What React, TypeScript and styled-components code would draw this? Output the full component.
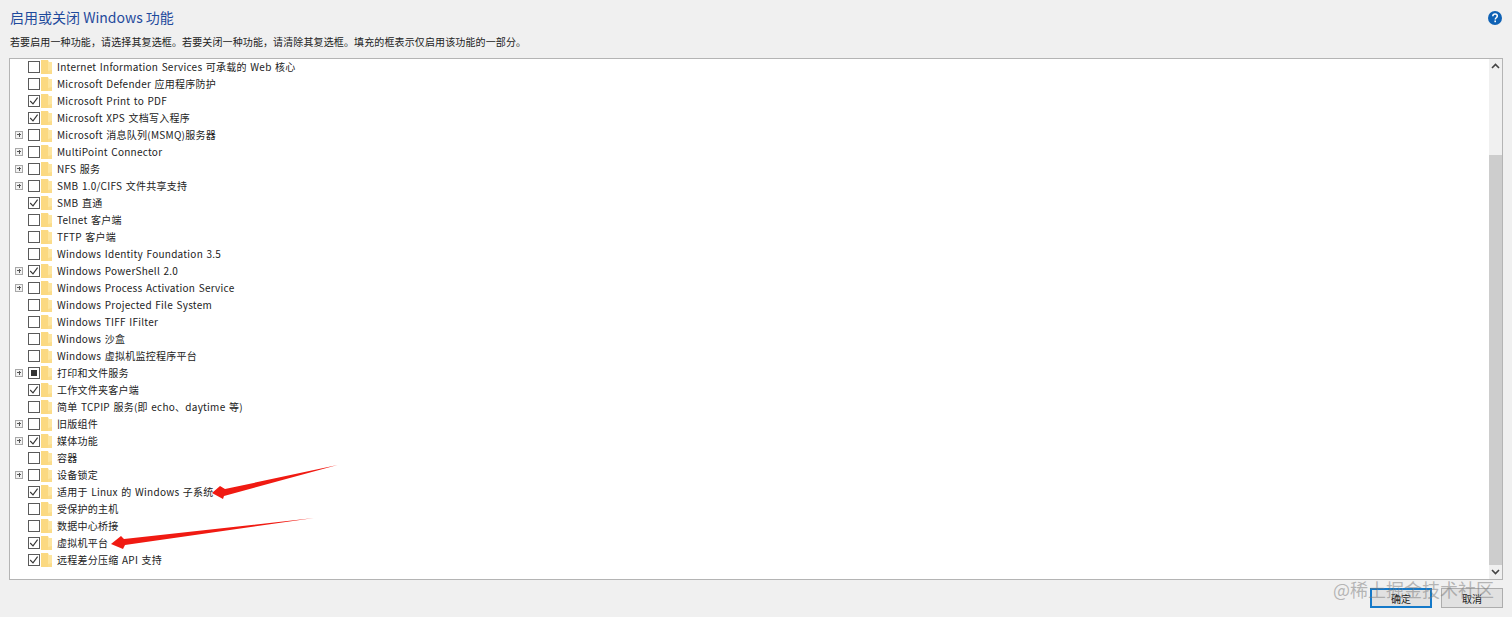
import styled, { createGlobalStyle } from 'styled-components';

type CheckState = 'off' | 'on' | 'mixed';

interface Feature {
  label: string;
  check?: CheckState;
  expandable?: boolean;
}

const features: Feature[] = [
  { label: 'Internet Information Services 可承载的 Web 核心' },
  { label: 'Microsoft Defender 应用程序防护' },
  { label: 'Microsoft Print to PDF', check: 'on' },
  { label: 'Microsoft XPS 文档写入程序', check: 'on' },
  { label: 'Microsoft 消息队列(MSMQ)服务器', expandable: true },
  { label: 'MultiPoint Connector', expandable: true },
  { label: 'NFS 服务', expandable: true },
  { label: 'SMB 1.0/CIFS 文件共享支持', expandable: true },
  { label: 'SMB 直通', check: 'on' },
  { label: 'Telnet 客户端' },
  { label: 'TFTP 客户端' },
  { label: 'Windows Identity Foundation 3.5' },
  { label: 'Windows PowerShell 2.0', check: 'on', expandable: true },
  { label: 'Windows Process Activation Service', expandable: true },
  { label: 'Windows Projected File System' },
  { label: 'Windows TIFF IFilter' },
  { label: 'Windows 沙盒' },
  { label: 'Windows 虚拟机监控程序平台' },
  { label: '打印和文件服务', check: 'mixed', expandable: true },
  { label: '工作文件夹客户端', check: 'on' },
  { label: '简单 TCPIP 服务(即 echo、daytime 等)' },
  { label: '旧版组件', expandable: true },
  { label: '媒体功能', check: 'on', expandable: true },
  { label: '容器' },
  { label: '设备锁定', expandable: true },
  { label: '适用于 Linux 的 Windows 子系统', check: 'on' },
  { label: '受保护的主机' },
  { label: '数据中心桥接' },
  { label: '虚拟机平台', check: 'on' },
  { label: '远程差分压缩 API 支持', check: 'on' },
];

const GlobalStyle = createGlobalStyle`
  html, body {
    margin: 0;
    padding: 0;
    background: #f0f0f0;
  }
`;

const Dialog = styled.div`
  position: relative;
  width: 1512px;
  height: 617px;
  overflow: hidden;
  background: #f0f0f0;
  box-sizing: border-box;
  padding: 8px 9px 0;
  font-family: "Noto Sans CJK SC", "Noto Sans", sans-serif;
  color: #1a1a1a;
`;

const Header = styled.div`
  display: flex;
  justify-content: space-between;
  align-items: center;
  height: 19px;
`;

const Title = styled.h1`
  margin: 0 0 0 1px;
  font-size: 14px;
  line-height: 19px;
  font-weight: 400;
  color: #1f4a9c;
`;

const HelpIcon = styled.svg`
  width: 14px;
  height: 14px;
  margin-right: 1px;
`;

const Description = styled.p`
  margin: 7px 0 0 1px;
  font-size: 10px;
  line-height: 16px;
  height: 16px;
  letter-spacing: 0.12px;
  color: #222;
`;

const ListBox = styled.div`
  display: flex;
  width: 1494px;
  height: 522px;
  margin-top: 8px;
  box-sizing: border-box;
  border: 1px solid #b4b4b4;
  background: #fff;
`;

const Rows = styled.ul`
  flex: 1;
  margin: -1px 0 0;
  padding: 0;
  list-style: none;
`;

const Row = styled.li`
  display: flex;
  align-items: center;
  height: 17px;
  padding-left: 5px;
`;

const ExpanderSlot = styled.span`
  width: 8px;
  height: 8px;
  margin-right: 5px;
`;

const Expander = styled.span`
  display: block;
  position: relative;
  width: 8px;
  height: 8px;
  box-sizing: border-box;
  border: 1px solid #a8a8a8;
  background: #f2f2f2;

  &::before,
  &::after {
    content: '';
    position: absolute;
    background: #555;
  }
  &::before {
    left: 1px;
    top: 2.5px;
    width: 4px;
    height: 1px;
  }
  &::after {
    left: 2.5px;
    top: 1px;
    width: 1px;
    height: 4px;
  }
`;

const CheckBox = styled.span<{ $mixed: boolean }>`
  display: flex;
  align-items: center;
  justify-content: center;
  width: 10px;
  height: 10px;
  box-sizing: content-box;
  border: 1px solid #5a5a5a;
  background: #fff;

  &::after {
    content: '';
    display: ${(p) => (p.$mixed ? 'block' : 'none')};
    width: 6px;
    height: 6px;
    background: #333;
  }
`;

const Tick = styled.svg`
  width: 10px;
  height: 10px;
`;

const Folder = styled.svg`
  width: 11px;
  height: 14px;
  margin-left: 1px;
`;

const Label = styled.span`
  margin-left: 5px;
  font-size: 10px;
  line-height: 17px;
  letter-spacing: 0.25px;
  word-spacing: 1px;
  white-space: nowrap;
  color: #222;
`;

const ScrollBar = styled.div`
  display: flex;
  flex-direction: column;
  width: 13px;
  background: #f0f0f0;
`;

const ScrollButton = styled.svg`
  width: 13px;
  height: 14px;
  flex: none;
`;

const ScrollTrack = styled.div`
  flex: 1;
  padding-top: 82px;
  display: flex;
`;

const ScrollThumb = styled.div`
  flex: 1;
  background: #cdcdcd;
`;

const Footer = styled.div`
  display: flex;
  justify-content: flex-end;
  gap: 9px;
  margin-top: 8px;
`;

const Button = styled.button<{ $primary?: boolean }>`
  width: 62px;
  height: 20px;
  padding: 0;
  box-sizing: border-box;
  border: ${(p) => (p.$primary ? '2px solid #1479c9' : '1px solid #adadad')};
  background: #e1e1e1;
  font-family: inherit;
  font-size: 10px;
  line-height: 15px;
  color: #1a1a1a;
`;

const Arrows = styled.svg`
  position: absolute;
  left: 0;
  top: 0;
  width: 1512px;
  height: 617px;
  pointer-events: none;
`;

const Watermark = styled.span`
  position: absolute;
  right: 18px;
  top: 576px;
  font-size: 18px;
  line-height: 26px;
  color: rgba(120, 120, 120, 0.5);
  white-space: nowrap;
`;

const FolderGlyph = () => (
  <Folder viewBox="0 0 11 14">
    <path d="M0 0h7l1 2h3v12H0z" fill="#fde59f" />
    <path d="M0 0h7v14H0z" fill="#fbd981" />
    <path d="M7 11l4-1v4H7z" fill="#fbdc8a" />
  </Folder>
);

const FeatureRow = ({ label, check = 'off', expandable }: Feature) => (
  <Row>
    <ExpanderSlot>{expandable && <Expander />}</ExpanderSlot>
    <CheckBox $mixed={check === 'mixed'}>
      {check === 'on' && (
        <Tick viewBox="0 0 10 10">
          <path d="M1.2 5l2.8 2.8 4.6-6.2" fill="none" stroke="#333" strokeWidth="1.1" />
        </Tick>
      )}
    </CheckBox>
    <FolderGlyph />
    <Label>{label}</Label>
  </Row>
);

export default function App() {
  return (
    <>
      <GlobalStyle />
      <Dialog>
        <Header>
          <Title>启用或关闭 Windows 功能</Title>
          <HelpIcon viewBox="0 0 14 14">
            <circle cx="7" cy="7" r="7" fill="#0f62b5" />
            <path
              d="M4.8 5.2c.1-1.4 1.1-2.1 2.3-2.1 1.3 0 2.2.8 2.2 1.9 0 1.7-2 1.7-2 3.4"
              fill="none"
              stroke="#fff"
              strokeWidth="1.5"
            />
            <rect x="6.4" y="9.5" width="1.6" height="1.7" fill="#fff" />
          </HelpIcon>
        </Header>
        <Description>
          {'若要启用一种功能\uFF0C请选择其复选框。若要关闭一种功能\uFF0C请清除其复选框。填充的框表示仅启用该功能的一部分。'}
        </Description>
        <ListBox>
          <Rows>
            {features.map((feature) => (
              <FeatureRow key={feature.label} {...feature} />
            ))}
          </Rows>
          <ScrollBar>
            <ScrollButton viewBox="0 0 13 14">
              <path d="M3 9l3.5-3.5L10 9" fill="none" stroke="#444" strokeWidth="1.6" />
            </ScrollButton>
            <ScrollTrack>
              <ScrollThumb />
            </ScrollTrack>
            <ScrollButton viewBox="0 0 13 14">
              <path d="M3 5l3.5 3.5L10 5" fill="none" stroke="#444" strokeWidth="1.6" />
            </ScrollButton>
          </ScrollBar>
        </ListBox>
        <Footer>
          <Button $primary>确定</Button>
          <Button>取消</Button>
        </Footer>
        <Arrows viewBox="0 0 1512 617">
          <path d="M337.5 465L225 489L220 486L212 493L223 499L224 496z" fill="#f01a12" />
          <path d="M314 518L124 539L121 536L111 544L123 549L125 545z" fill="#f01a12" />
        </Arrows>
        <Watermark>@稀土掘金技术社区</Watermark>
      </Dialog>
    </>
  );
}
